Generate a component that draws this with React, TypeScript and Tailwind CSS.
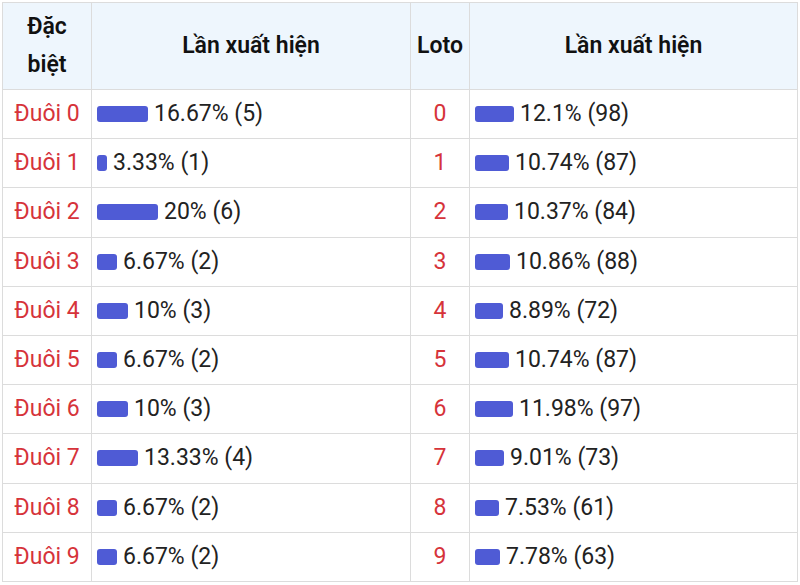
const rows = [
  { label: 'Đuôi 0', pct: 16.67, count: 5, loto: 0, lpct: 12.1, lcount: 98 },
  { label: 'Đuôi 1', pct: 3.33, count: 1, loto: 1, lpct: 10.74, lcount: 87 },
  { label: 'Đuôi 2', pct: 20, count: 6, loto: 2, lpct: 10.37, lcount: 84 },
  { label: 'Đuôi 3', pct: 6.67, count: 2, loto: 3, lpct: 10.86, lcount: 88 },
  { label: 'Đuôi 4', pct: 10, count: 3, loto: 4, lpct: 8.89, lcount: 72 },
  { label: 'Đuôi 5', pct: 6.67, count: 2, loto: 5, lpct: 10.74, lcount: 87 },
  { label: 'Đuôi 6', pct: 10, count: 3, loto: 6, lpct: 11.98, lcount: 97 },
  { label: 'Đuôi 7', pct: 13.33, count: 4, loto: 7, lpct: 9.01, lcount: 73 },
  { label: 'Đuôi 8', pct: 6.67, count: 2, loto: 8, lpct: 7.53, lcount: 61 },
  { label: 'Đuôi 9', pct: 6.67, count: 2, loto: 9, lpct: 7.78, lcount: 63 },
];

function Bar({ pct, scale, text }: { pct: number; scale: number; text: string }) {
  return (
    <div className="flex items-center gap-[6px]">
      <span
        className="inline-block h-[16px] rounded-[3px] bg-[#4f5bd5]"
        style={{ width: Math.round(pct * scale) }}
      />
      <span>{text}</span>
    </div>
  );
}

export default function App() {
  return (
    <div className="bg-white pt-[2px] pl-[2px] font-['Roboto',sans-serif] text-[23px] leading-[38px] text-[#222]">
      <table className="w-[795px] table-fixed border-collapse">
        <colgroup>
          <col className="w-[89px]" />
          <col className="w-[319px]" />
          <col className="w-[59px]" />
          <col className="w-[328px]" />
        </colgroup>
        <thead>
          <tr className="h-[87px] bg-[#eef6fd] text-[#111]">
            <th className="border border-[#dcdcdc] px-[10px] py-0 text-center font-semibold">
              Đặc biệt
            </th>
            <th className="border border-[#dcdcdc] p-0 text-center font-semibold">Lần xuất hiện</th>
            <th className="border border-[#dcdcdc] p-0 text-center font-semibold">Loto</th>
            <th className="border border-[#dcdcdc] p-0 text-center font-semibold">Lần xuất hiện</th>
          </tr>
        </thead>
        <tbody>
          {rows.map(r => (
            <tr key={r.label} className="h-[49.2px]">
              <td className="border border-[#dcdcdc] p-0 text-center text-[#d6333a]">{r.label}</td>
              <td className="border border-[#dcdcdc] px-[5px] py-0">
                <Bar pct={r.pct} scale={3.06} text={`${r.pct}% (${r.count})`} />
              </td>
              <td className="border border-[#dcdcdc] p-0 text-center text-[#d6333a]">{r.loto}</td>
              <td className="border border-[#dcdcdc] px-[5px] py-0">
                <Bar pct={r.lpct} scale={3.2} text={`${r.lpct}% (${r.lcount})`} />
              </td>
            </tr>
          ))}
        </tbody>
      </table>
    </div>
  );
}
